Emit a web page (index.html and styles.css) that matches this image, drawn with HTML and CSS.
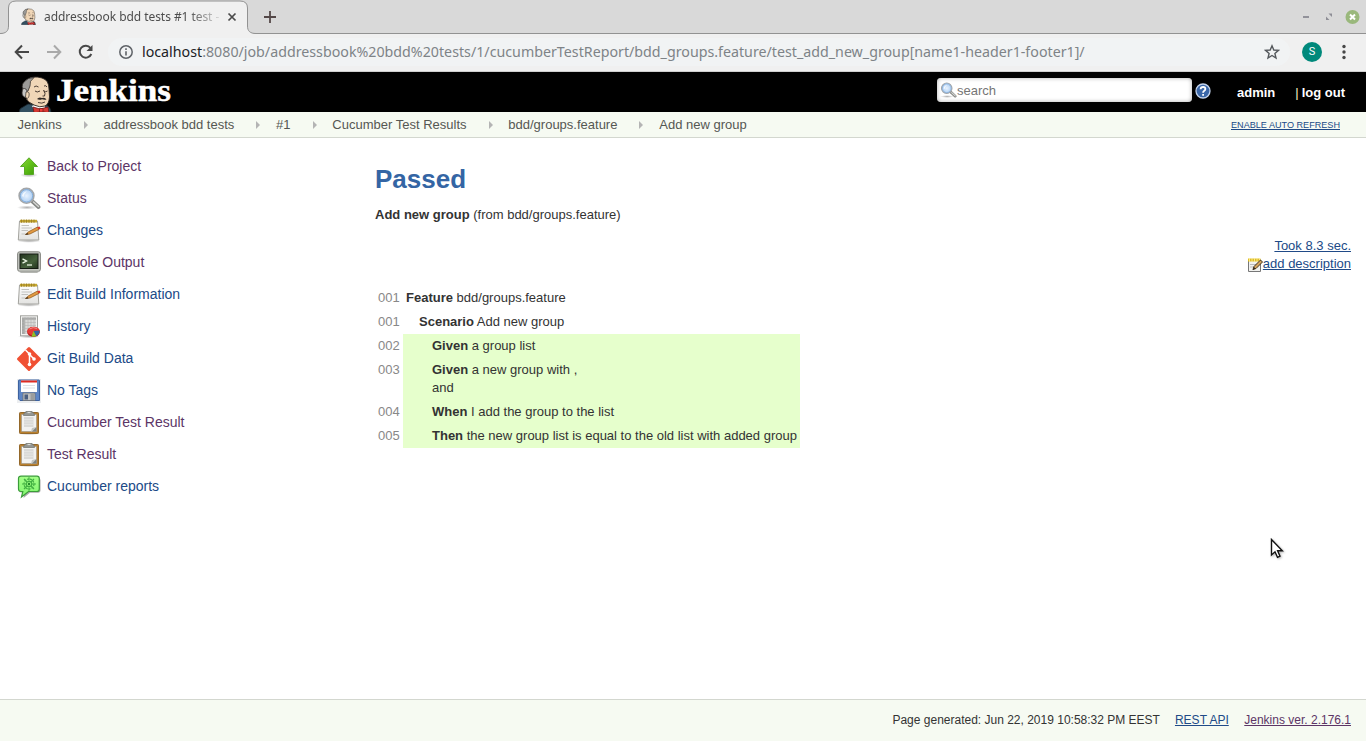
FILE: index.html
```
<!DOCTYPE html>
<html lang="en">
<head>
<meta charset="utf-8">
<title>addressbook bdd tests #1 test - Jenkins</title>
<link rel="stylesheet" href="styles.css">
</head>
<body>
<svg width="0" height="0" class="defs">
  <defs>
    <linearGradient id="gGreen" x1="0" y1="0" x2="1" y2="1"><stop offset="0" stop-color="#8ad63a"/><stop offset=".5" stop-color="#5fbe18"/><stop offset="1" stop-color="#3d9a07"/></linearGradient>
    <linearGradient id="gPaper" x1="0" y1="0" x2="0" y2="1"><stop offset="0" stop-color="#fff"/><stop offset="1" stop-color="#e2e2e0"/></linearGradient>
    <linearGradient id="gBlue" x1="0" y1="0" x2="0" y2="1"><stop offset="0" stop-color="#5f86c2"/><stop offset="1" stop-color="#5c86c8"/></linearGradient>
    <linearGradient id="gScreen" x1="0" y1="0" x2="1" y2="1"><stop offset="0" stop-color="#22331e"/><stop offset=".6" stop-color="#45613b"/><stop offset="1" stop-color="#20301c"/></linearGradient>
    <linearGradient id="gBubble" x1="0" y1="0" x2="0" y2="1"><stop offset="0" stop-color="#a4ff88"/><stop offset="1" stop-color="#80f56e"/></linearGradient>
    <radialGradient id="gLens"><stop offset="0" stop-color="#e9f3ff"/><stop offset="1" stop-color="#a9ccf2"/></radialGradient>
    <radialGradient id="gShadow"><stop offset="0" stop-color="#000" stop-opacity=".3"/><stop offset="1" stop-color="#000" stop-opacity="0"/></radialGradient>
  </defs>
  <symbol id="butler" viewBox="0 0 34 37">
    <path d="M1 37 Q1 32 5 31 L10 28 L28 29 Q33 31 33 37Z" fill="#335061" stroke="#18232b" stroke-width=".8"/>
    <path d="M14 30 L18 28 L27 30 L27 37 L18 37Z" fill="#fff"/>
    <path d="M7 19 Q5 10 9 4 Q15 -1 24 2 Q31 4 31 13 L31.500 21 Q31 28 27 30 Q22 32 16 29 Q9 26 8 22Z" fill="#f0d6b7" stroke="#2b2521" stroke-width=".9"/>
    <path d="M7 16 Q2 10 6 6 Q10 1 16 1.500 Q11 5 12 10 L10 15Z" fill="#9b9a98" stroke="#35302d" stroke-width=".8"/>
    <path d="M4.500 13 Q9 11 9 17 L9 22 Q4 21 4 17Z" fill="#c5c5c3" stroke="#35302d" stroke-width=".8"/>
    <path d="M8 16 Q12 15 11 20 Q10 24 7.500 21Z" fill="#f0d6b7" stroke="#35302d" stroke-width=".7"/>
    <path d="M16 11 Q18 9 20.500 11 M26 10 Q28 9 29 11 M17 15 Q19 17 22 15 M26 15 Q27.500 16.500 29.500 15 M25.500 14 Q28 18 26.500 20 L24.500 20 M20 26.500 Q24 28 27 26" fill="none" stroke="#392c26" stroke-width=".9"/>
    <path d="M19 23 Q21 20.500 24 22 Q27 21 28.500 23.500 Q26 24 24 23.300 Q21 24.500 19 23Z" fill="#302a27"/>
    <path d="M15 31 L22 33 L30 31 L31 37 L24 35.500 L16 37Z" fill="#d33833" stroke="#6d1715" stroke-width=".8"/>
    <path d="M21.500 32.500 H25 V36 H21.500Z" fill="#ef3d3a" stroke="#6d1715" stroke-width=".7"/>
  </symbol>
  <symbol id="up" viewBox="0 0 24 24">
    <ellipse cx="12" cy="20" rx="9" ry="2.500" fill="url(#gShadow)"/>
    <path d="M12 2.800 L20.500 11.500 H16.500 V19.500 H7.500 V11.500 H3.500Z" fill="url(#gGreen)" stroke="#58a826" stroke-width="1"/>
  </symbol>
  <symbol id="search" viewBox="0 0 24 24">
    <ellipse cx="10" cy="20.500" rx="10" ry="2" fill="url(#gShadow)"/>
    <path d="M15.500 14.500 L21.500 20" stroke="#858784" stroke-width="3.800" stroke-linecap="round"/>
    <path d="M16.500 15 L21.500 19.500" stroke="#d5d6d3" stroke-width="1.500" stroke-linecap="round"/>
    <circle cx="9.500" cy="8.800" r="7.400" fill="url(#gLens)" stroke="#a4a6a8" stroke-width="1.600"/>
    <circle cx="9.500" cy="8.800" r="6.200" fill="none" stroke="#7ea9d8" stroke-width=".9"/>
    <path d="M5 9 Q6 4.500 10 4.500 Q7 6 6.500 10Z" fill="#fff" opacity=".8"/>
  </symbol>
  <symbol id="notepad" viewBox="0 0 24 24">
    <ellipse cx="12" cy="22" rx="12" ry="1.800" fill="url(#gShadow)"/>
    <path d="M2.500 2 H20.500 L21.800 21 H1.300Z" fill="url(#gPaper)" stroke="#a3a39e" stroke-width="1"/>
    <path d="M3 .8 H20 V3.500 H3Z" fill="#c5a72f"/>
    <path d="M4.500 .5 V3.800 M7 .5 V3.800 M9.500 .5 V3.800 M12 .5 V3.800 M14.500 .5 V3.800 M17 .5 V3.800" stroke="#94792a" stroke-width=".8"/>
    <path d="M4.500 6.500 H12 M4.500 9 H15 M4.500 11.500 H11 M4.500 15 H9" stroke="#c2c2bf" stroke-width="1"/>
    <path d="M8.500 15.500 L11.500 12.800 L20.500 8 L22 10.400 L13 15Z" fill="#e29a43" stroke="#895519" stroke-width=".7"/>
    <path d="M20.200 8.200 L22.500 7.400 L23.600 9.600 L21.800 10.500Z" fill="#d83a2b"/>
    <path d="M8 16 L10.500 13.700 L11.500 15.500Z" fill="#4b3a25"/>
  </symbol>
  <symbol id="console" viewBox="0 0 24 24">
    <rect x=".6" y=".8" width="22.800" height="19.500" rx="2" fill="#c4c6c0" stroke="#83857f"/>
    <path d="M1.500 20.500 H22.500 L20 22 H4Z" fill="#b4b6b1"/>
    <rect x="3" y="3" width="18" height="14.500" fill="url(#gScreen)" stroke="#141b12"/>
    <path d="M5.500 7.800 L9.500 10 L5.500 12.200" fill="none" stroke="#e9f5e2" stroke-width="1.400"/>
    <path d="M10 14 H15" stroke="#e9f5e2" stroke-width="1.300"/>
  </symbol>
  <symbol id="history" viewBox="0 0 24 24">
    <ellipse cx="12" cy="21.500" rx="11" ry="1.800" fill="url(#gShadow)"/>
    <rect x="3.500" y=".8" width="17" height="20" fill="#f3f3f1" stroke="#a0a19d"/>
    <path d="M5 2.500 H19 V19 H5Z" fill="#d9dad8"/>
    <path d="M5 2.500 H19 V4.800 H7.800 V19 H5Z" fill="#a9aaa8"/>
    <path d="M5 7.500 H19 M5 10.500 H19 M5 13.500 H19 M5 16.500 H19 M8 2 V19 M11 2 V19 M14 2 V19 M17 2 V19" stroke="#b2b3b1" stroke-width=".6"/>
    <ellipse cx="16.500" cy="17" rx="6.300" ry="5" fill="#b51d1d"/>
    <ellipse cx="16.500" cy="16" rx="6.300" ry="4.300" fill="#e53b36"/>
    <path d="M16.500 16 L22.500 15.500 Q23 19 19 21.200Z" fill="#3465a4"/>
    <path d="M16.500 16 L19.200 21.200 Q17 22 14.500 21.500Z" fill="#8bc324"/>
    <path d="M12.500 14 Q16 11.500 20 13.500" fill="none" stroke="#f28b87" stroke-width="1"/>
  </symbol>
  <symbol id="git" viewBox="0 0 24 24">
    <path d="M11 .5 Q12 -.5 13 .5 L23.500 11 Q24.500 12 23.500 13 L13 23.500 Q12 24.500 11 23.500 L.5 13 Q-.5 12 .5 11Z" fill="#f05033"/>
    <path d="M8.500 3 L12.500 7 V17.500 M12.500 7.500 L16.800 11.800" fill="none" stroke="#fff" stroke-width="1.500"/>
    <circle cx="12.500" cy="7" r="1.800" fill="#fff"/><circle cx="12.500" cy="17.500" r="1.800" fill="#fff"/><circle cx="17" cy="12" r="1.800" fill="#fff"/>
  </symbol>
  <symbol id="floppy" viewBox="0 0 24 24">
    <rect width="24" height="24" fill="#eceef0"/>
    <path d="M1.500 1.500 Q1.500 1 2 1 H22 Q22.500 1 22.500 1.500 V21.500 H3 L1.500 20Z" fill="url(#gBlue)" stroke="#3d62a0"/>
    <rect x="4" y="1.500" width="16" height="11.500" fill="#fff"/>
    <rect x="4" y="1.500" width="16" height="2" fill="#df2b22"/>
    <path d="M6 6.500 H18 M6 9 H18" stroke="#d4d8df" stroke-width=".8"/>
    <rect x="6" y="14" width="12" height="7.500" fill="#bfc1c2" stroke="#6e7174" stroke-width=".8"/>
    <rect x="7.500" y="15.500" width="3.500" height="5" fill="#4a5f80"/>
    <path d="M13.500 14.500 H17 V21 H13.500Z" fill="#9b9d9d"/>
  </symbol>
  <symbol id="clipboard" viewBox="0 0 24 24">
    <ellipse cx="12" cy="22.800" rx="11" ry="1.200" fill="url(#gShadow)"/>
    <rect x="2.500" y="1.500" width="19" height="21" rx=".8" fill="#b9802f" stroke="#94682a"/>
    <path d="M4.500 3.500 H19.500 V20.500 H4.500Z" fill="#f2f2f1" stroke="#8d8d88" stroke-width=".5"/>
    <path d="M7 6 H16.500 V16 H7Z" fill="#dadad8"/>
    <path d="M7 8.500 H16.500 M7 11 H16.500 M7 13.500 H16.500" stroke="#e6e6e4" stroke-width=".8"/>
    <path d="M14 20.500 L15 17 L19.500 16 L15 20.500Z" fill="#c3c4c1"/><path d="M19.500 16 V20.500 H15Z" fill="#7e807c"/>
    <path d="M6.500 4.500 Q6.500 1.500 8.500 1.500 L9 .3 H15 L15.500 1.500 Q17.500 1.500 17.500 4.500Z" fill="#949692" stroke="#70726d" stroke-width=".7"/>
    <path d="M10.500 1.600 H13.500" stroke="#e4e5e1"/>
  </symbol>
  <symbol id="bubble" viewBox="0 0 24 24">
    <path d="M3 3 H21 Q23.500 3 23.500 5 V15 Q23.500 17.800 21 17.800 H13 L6.500 23 L7.500 17.500 H4 Q2 17.500 2 15Z" fill="#555" opacity=".5"/>
    <path d="M4 1.200 H20 Q22.300 1.200 22.300 3.500 V14 Q22.300 16.500 20 16.500 H11.500 L4.500 22 L5.800 16.500 H4 Q1.500 16.500 1.500 14 V3.500 Q1.500 1.200 4 1.200Z" fill="url(#gBubble)" stroke="#3b9c3a" stroke-width="1.200"/>
    <g fill="none" stroke="#43b043" stroke-width="1.200"><circle cx="12" cy="9" r="2.700"/><circle cx="12" cy="9" r="5" stroke-dasharray="2 1"/><path d="M12 2.300 V5.500 M12 12.500 V15.700 M5 9 H9 M15 9 H19 M7 4 L10 7 M17 4 L14 7 M7 14 L10 11 M17 14 L14 11"/></g>
    <circle cx="12" cy="9" r="1.200" fill="#258b2b"/>
  </symbol>
</svg>

<div class="window">
  <div class="tabstrip">
    <svg class="tabshape" width="260" height="34"><path d="M0 33.500 C6 33.500 8.500 31 8.500 26 V8 Q8.500 1 16 1 H240 Q247.500 1 247.500 8 V26 C247.500 31 250 33.500 256 33.500 V35 H0Z" fill="#f0f0f0" stroke="#929292"/></svg>
    <div class="tab">
      <svg class="favicon"><use href="#butler"/></svg>
      <span class="tab-title">addressbook bdd tests #1 test -</span>
      <svg class="tab-close" width="10" height="10"><path d="M1.500 1.500 L8.500 8.500 M8.500 1.500 L1.500 8.500" stroke="#4a4a4a" stroke-width="1.700"/></svg>
    </div>
    <svg class="newtab" width="14" height="14"><path d="M7 1 V13 M1 7 H13" stroke="#544848" stroke-width="1.800"/></svg>
    <svg class="winbuttons" width="62" height="16">
      <path d="M2 8 H8" stroke="#8b8b93" stroke-width="1.800"/>
      <path d="M27.500 4.500 H31 V8Z M25 7.500 V11 H28.500Z" fill="#8e8e96"/>
      <circle cx="51.500" cy="8" r="7" fill="#9ab87c"/><path d="M49 5.500 L54 10.500 M54 5.500 L49 10.500" stroke="#fff" stroke-width="2"/>
    </svg>
  </div>

  <div class="toolbar">
    <svg class="nav" width="100" height="20" fill="none" stroke-width="2">
      <path d="M15 10 H2 M8 3.500 L1.700 10 L8 16.500" stroke="#474747"/>
      <path d="M33 10 H46 M40 3.500 L46.300 10 L40 16.500" stroke="#a9a9a9"/>
      <path d="M76.500 6 A6 6 0 1 0 77.300 12" stroke="#474747"/><path d="M78.500 3 V9 H72.500Z" fill="#474747"/>
    </svg>
    <div class="omnibox">
      <svg width="16" height="16" fill="none"><circle cx="8" cy="8" r="6.200" stroke="#5f6368" stroke-width="1.500"/><path d="M8 7.200 V11.500 M8 4.300 V6" stroke="#5f6368" stroke-width="1.600"/></svg>
      <span class="url"><b>localhost</b>:8080/job/addressbook%20bdd%20tests/1/cucumberTestReport/bdd_groups.feature/test_add_new_group[name1-header1-footer1]/</span>
      <svg class="star" width="16" height="16"><path d="M8 1.800 L9.800 6 L14.400 6.400 L10.900 9.400 L12 14 L8 11.500 L4 14 L5.100 9.400 L1.600 6.400 L6.200 6Z" fill="none" stroke="#54585c" stroke-width="1.400"/></svg>
    </div>
    <span class="avatar">S</span>
    <svg class="kebab" width="4" height="16" fill="#474747"><circle cx="2" cy="2.500" r="1.700"/><circle cx="2" cy="8" r="1.700"/><circle cx="2" cy="13.500" r="1.700"/></svg>
  </div>

  <header class="header">
    <svg class="logo" width="34" height="36"><use href="#butler" width="34" height="37"/></svg>
    <svg class="wordmark" width="120" height="40"><text x="1" y="29" textLength="115" lengthAdjust="spacingAndGlyphs">Jenkins</text></svg>
    <div class="searchbox"><svg width="17" height="17"><use href="#search"/></svg><span>search</span></div>
    <svg class="help" width="16" height="16"><circle cx="8" cy="8" r="7" fill="#3b67a8" stroke="#c3d3ec" stroke-width="1.300"/><path d="M5.600 6.300 Q5.700 4 8.100 4 Q10.400 4 10.400 6 Q10.400 7.100 9 8 Q8.100 8.600 8.100 9.800 M8.100 10.900 V12.700" fill="none" stroke="#fff" stroke-width="1.800"/></svg>
    <b class="user">admin</b>
    <span class="logout"><i>|</i><b>log out</b></span>
  </header>

  <nav class="crumbs">
    <span>Jenkins</span><i></i><span>addressbook bdd tests</span><i></i><span>#1</span><i></i><span>Cucumber Test Results</span><i></i><span>bdd/groups.feature</span><i></i><span>Add new group</span>
    <a class="refresh">ENABLE AUTO REFRESH</a>
  </nav>

  <div class="body">
    <aside class="tasks">
      <a class="visited"><svg><use href="#up"/></svg>Back to Project</a>
      <a class="visited"><svg><use href="#search"/></svg>Status</a>
      <a><svg><use href="#notepad"/></svg>Changes</a>
      <a class="visited"><svg><use href="#console"/></svg>Console Output</a>
      <a><svg><use href="#notepad"/></svg>Edit Build Information</a>
      <a><svg><use href="#history"/></svg>History</a>
      <a><svg><use href="#git"/></svg>Git Build Data</a>
      <a><svg><use href="#floppy"/></svg>No Tags</a>
      <a class="visited"><svg><use href="#clipboard"/></svg>Cucumber Test Result</a>
      <a class="visited"><svg><use href="#clipboard"/></svg>Test Result</a>
      <a><svg><use href="#bubble"/></svg>Cucumber reports</a>
    </aside>
    <main class="main">
      <h1>Passed</h1>
      <p class="from"><b>Add new group</b> (from bdd/groups.feature)</p>
      <div class="meta">
        <a>Took 8.3 sec.</a>
        <span class="desc"><svg width="16" height="16" viewBox="0 0 16 16"><path d="M1.500 2.500 H13.500 V14.500 H1.500Z" fill="#f2f2ef" stroke="#777"/><path d="M1 1.500 H13.500 V4.500 H1Z" fill="#dfbd26"/><path d="M2.500 1 V5 M5 1 V5 M7.500 1 V5 M10 1 V5 M12.500 1 V5" stroke="#fff3a1" stroke-width=".8"/><path d="M3 7.500 H10 M3 10 H7" stroke="#bbb"/><path d="M6 12.500 L7 9.500 L13.500 3 L15.500 5 L9 11.500Z" fill="#d6a35c" stroke="#41321f"/><path d="M5.500 13 L7 10 L8.500 11.500Z" fill="#33281c"/></svg><a>add description</a></span>
      </div>
      <div class="steps">
        <span class="num">001</span><div><b>Feature</b> bdd/groups.feature</div>
        <span class="num">001</span><div class="scenario"><b>Scenario</b> Add new group</div>
        <span class="num">002</span><div class="step"><b>Given</b> a group list</div>
        <span class="num">003</span><div class="step"><b>Given</b> a new group with ,<br>and</div>
        <span class="num">004</span><div class="step"><b>When</b> I add the group to the list</div>
        <span class="num">005</span><div class="step"><b>Then</b> the new group list is equal to the old list with added group</div>
      </div>
    </main>
  </div>

  <footer class="footer"><span>Page generated: Jun 22, 2019 10:58:32 PM EEST</span><a>REST API</a><a class="visited">Jenkins ver. 2.176.1</a></footer>
</div>
<svg class="cursor" width="16" height="24"><path d="M1.500 1.500 V17 L5 13.800 L7.500 19.300 L10 18.200 L7.600 12.700 H12.300Z" fill="#fff" stroke="#111" stroke-width="1.400"/></svg>
</body>
</html>
```
FILE: styles.css
```
* { box-sizing: border-box; }
body { margin: 0; font: 13px/18px "Liberation Sans", Arial, sans-serif; color: #333; background: #fff; overflow: hidden; }
svg { display: block; flex: none; }
.defs { position: absolute; }
.window { height: 741px; display: flex; flex-direction: column; }
a { color: #204a87; text-decoration: underline; }
a.visited { color: #5c3566; }

.tabstrip { position: relative; height: 34px; flex: none; display: flex; align-items: center; background: #d9d9d9; border-bottom: 1px solid #929292; padding-left: 21px; }
.tabshape { position: absolute; left: 0; top: 0; }
.tab { position: relative; display: flex; align-items: center; width: 216px; }
.favicon { width: 15px; height: 17px; }
.tab-title { margin-left: 8px; width: 175px; font: 12px/18px "Noto Sans", sans-serif; letter-spacing: -0.06px; white-space: nowrap; color: #4d4d4d; -webkit-mask-image: linear-gradient(to right, #000 145px, transparent 180px); mask-image: linear-gradient(to right, #000 145px, transparent 180px); }
.tab-close { margin-left: 8px; }
.newtab { margin-left: 26px; }
.winbuttons { margin-left: auto; margin-right: 3px; }

.toolbar { height: 38px; flex: none; display: flex; align-items: center; background: #f0f0f0; border-bottom: 1px solid #cfcfcf; padding: 0 19px 2px 14px; }
.omnibox { width: 1182px; height: 28px; margin-left: -6px; border-radius: 14px; background: #f1f3f4; display: flex; align-items: center; padding: 0 10px 0 10px; }
.url { margin-left: 8px; font: 14.24px/20px "Noto Sans", sans-serif; color: #7e8387; white-space: nowrap; }
.url b { font-weight: 400; color: #202124; }
.star { margin-left: auto; }
.avatar { margin-left: 12px; width: 20px; height: 20px; border-radius: 50%; background: #00897b; color: #fff; font: 11px/20px Roboto, sans-serif; text-align: center; }
.kebab { margin-left: 20px; }

.header { height: 40px; flex: none; background: #000; display: flex; color: #fff; padding: 0 21px 0 18px; }
.logo { margin-top: 4px; }
.wordmark { margin-left: 3px; font: bold 31px "Liberation Serif", serif; fill: #fff; stroke: #fff; stroke-width: .5px; }
.searchbox { margin: 6px 0 0 auto; width: 255px; height: 24px; border-radius: 4px; background: #fff; box-shadow: inset 0 0 4px #aaa; color: #757575; display: flex; align-items: center; padding-left: 3px; }
.searchbox span { margin: 1px 0 0; }
.help { margin: 11px 0 0 3px; }
.user { margin: 12px 0 0 26px; }
.logout { margin: 12px 0 0 20px; }
.logout i { font-style: normal; color: #fcecc4; margin-right: 3px; }

.crumbs { height: 26px; flex: none; background: #f6faf2; border-bottom: 1px solid #d3d7cf; display: flex; align-items: center; padding: 0 26px 0 17.6px; color: #555753; }
.crumbs i { margin: 1px 15.8px 0 22px; border: 4px solid transparent; border-left-color: #b4b4b4; border-right: 0; }
.refresh { margin-left: auto; font-size: 9.1px; }

.body { flex: 1; display: flex; }
.tasks { width: 360px; padding: 16px 0 0 17px; display: flex; flex-direction: column; gap: 8px; font-size: 14px; }
.tasks a { display: flex; height: 24px; align-items: center; gap: 6px; text-decoration: none; }
.tasks svg { width: 24px; height: 24px; margin-top: 2px; }
.main { flex: 1; padding: 26px 15px 0; }
h1 { margin: 0; font-size: 26px; line-height: 30px; color: #3465a4; }
.from { margin: 12px 0 0; }
.meta { margin-top: 13px; display: flex; flex-direction: column; align-items: flex-end; }
.desc { display: flex; align-items: center; }
.desc svg { margin: 1px 0 0; }
.steps { margin-top: 13px; display: grid; grid-template-columns: 28px max-content; }
.steps > * { padding: 3px; }
.num { color: #888; }
.steps .scenario { padding-left: 16px; }
.steps .step { padding-left: 29px; background: #e6ffcc; }

.footer { height: 42px; flex: none; background: #f6faf2; border-top: 1px solid #d3d7cf; display: flex; justify-content: flex-end; align-items: center; gap: 15px; padding: 0 15px 2px 0; font-size: 12px; }
.footer a:first-of-type { margin-right: .5px; }
.cursor { position: absolute; left: 1270px; top: 538px; filter: drop-shadow(1px 1px 1px rgba(0, 0, 0, .3)); }
```
